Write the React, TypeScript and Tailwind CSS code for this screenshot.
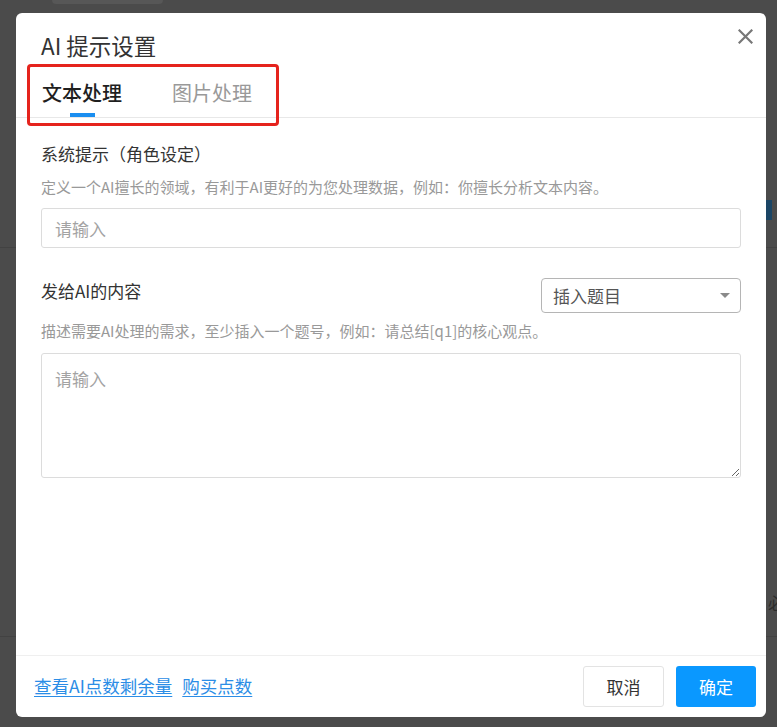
import React, { useState } from 'react';

const App: React.FC = () => {
  const [tab, setTab] = useState<'text' | 'image'>('text');
  const [systemPrompt, setSystemPrompt] = useState('');
  const [content, setContent] = useState('');

  return (
    <div className="relative w-[777px] h-[727px] overflow-hidden bg-[#4b4b4b] font-['Noto_Sans_CJK_SC','Noto_Sans',sans-serif]">
      {/* dimmed page behind the dialog */}
      <div className="flex flex-col h-full">
        <div className="ml-[52px] w-[111px] h-[4px] rounded-b-[4px] bg-[#575757]" />
        <div className="h-[244px] border-b border-[#424242] flex justify-end items-start pt-[196px]">
          <div className="w-[6px] h-[20px] mr-[5px] bg-[#1b4565]" />
        </div>
        <div className="h-[389px] border-b border-[#424242] flex justify-end items-end pb-[24px]">
          <span className="text-[16px] leading-[20px] text-[#2c2c2c] mr-[-7px]">必</span>
        </div>
      </div>

      {/* dialog */}
      <div className="absolute left-[16px] top-[13px] w-[750px] h-[704px] bg-white rounded-[6px] flex flex-col">
        <button className="absolute right-[13px] top-[16px] w-[15px] h-[15px] flex items-center justify-center text-[#777]">
          <svg width="15" height="15" viewBox="0 0 15 15" fill="none" stroke="currentColor" strokeWidth="2.2" strokeLinecap="square">
            <path d="M1.5 1.5 L13.5 13.5 M13.5 1.5 L1.5 13.5" />
          </svg>
        </button>

        <div className="pl-[25px] pt-[18px]">
          <h2 className="text-[22.5px] leading-[28px] text-[#333] font-normal">AI 提示设置</h2>
        </div>

        <div className="flex gap-[50px] pl-[26px] border-b border-[#e8e8e8]">
          <button onClick={() => setTab('text')} className="w-[80px] pt-[22px] flex flex-col items-center">
            <span className={`text-[20px] leading-[24px] ${tab === 'text' ? 'text-[#1f1f1f] font-medium' : 'text-[#999]'}`}>文本处理</span>
            <span className={`mt-[8px] w-[25px] h-[4px] ${tab === 'text' ? 'bg-[#1a8ef0]' : 'bg-transparent'}`} />
          </button>
          <button onClick={() => setTab('image')} className="w-[80px] pt-[22px] flex flex-col items-center">
            <span className={`text-[20px] leading-[24px] ${tab === 'image' ? 'text-[#1f1f1f] font-medium' : 'text-[#999]'}`}>图片处理</span>
            <span className={`mt-[8px] w-[25px] h-[4px] ${tab === 'image' ? 'bg-[#1a8ef0]' : 'bg-transparent'}`} />
          </button>
        </div>

        {/* annotation box */}
        <div className="absolute left-[11px] top-[51px] w-[252px] h-[62px] border-[3px] border-[#e5231d] rounded-[4px] pointer-events-none" />

        <div className="px-[25px] pt-[24px]">
          <div className="text-[17px] leading-[24px] text-[#333]">系统提示（角色设定）</div>
          <div className="mt-[11px] text-[15px] leading-[20px] text-[#999]">定义一个AI擅长的领域，有利于AI更好的为您处理数据，例如：你擅长分析文本内容。</div>
          <input
            value={systemPrompt}
            onChange={e => setSystemPrompt(e.target.value)}
            placeholder="请输入"
            className="mt-[11px] w-full h-[40px] px-[13px] border border-[#dcdcdc] rounded-[3px] text-[17px] text-[#333] placeholder:text-[#a3a3a3] outline-none"
          />

          <div className="mt-[30px] flex justify-between items-start">
            <div className="text-[17px] leading-[24px] text-[#333] pt-[1px]">发给AI的内容</div>
            <button className="w-[200px] h-[35px] pl-[11px] pr-[10px] border border-[#b5b5b5] rounded-[4px] flex items-center justify-between">
              <span className="text-[17px] text-[#555]">插入题目</span>
              <svg width="10" height="5" viewBox="0 0 10 5">
                <path d="M0 0 L10 0 L5 5 Z" fill="#8a8a8a" />
              </svg>
            </button>
          </div>
          <div className="mt-[8px] text-[15px] leading-[20px] text-[#999]">描述需要AI处理的需求，至少插入一个题号，例如：请总结[q1]的核心观点。</div>
          <textarea
            value={content}
            onChange={e => setContent(e.target.value)}
            placeholder="请输入"
            className="mt-[12px] block w-full h-[125px] px-[13px] pt-[13px] border border-[#dcdcdc] rounded-[3px] text-[17px] leading-[24px] text-[#333] placeholder:text-[#a3a3a3] outline-none"
          />
        </div>

        <div className="mt-auto h-[62px] border-t border-[#efefef] flex items-center justify-between pl-[18px] pr-[10px]">
          <div className="flex gap-[10px] text-[17.5px] text-[#2b8de6]">
            <a href="#" className="underline underline-offset-[3px]">查看AI点数剩余量</a>
            <a href="#" className="underline underline-offset-[3px]">购买点数</a>
          </div>
          <div className="flex gap-[12px]">
            <button className="w-[81px] h-[41px] border border-[#e3e3e3] rounded-[3px] bg-white text-[17px] text-[#333]">取消</button>
            <button className="w-[80px] h-[41px] rounded-[3px] bg-[#0a98ff] text-[17px] text-white">确定</button>
          </div>
        </div>
      </div>
    </div>
  );
};

export default App;
